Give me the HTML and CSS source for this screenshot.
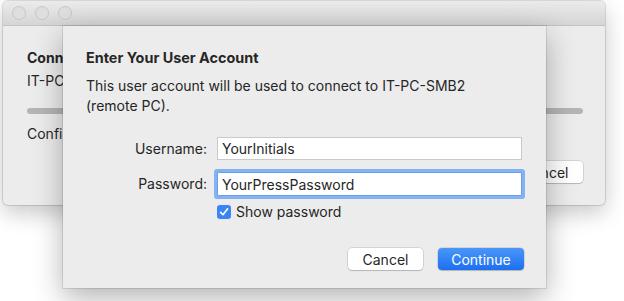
FILE: index.html
```html
<!DOCTYPE html>
<html lang="en">
<head>
    <meta charset="UTF-8">
    <title>Enter Your User Account</title>
    <link rel="stylesheet" href="styles.css">
</head>
<body>
    <div class="desktop">
        <!-- window behind the sheet, only the left edge of its text shows -->
        <div class="window">
            <div class="titlebar">
                <span class="light"></span>
                <span class="light"></span>
                <span class="light"></span>
            </div>
            <div class="window-body">
                <div class="bg-title clip">Conn</div>
                <div class="bg-text clip">IT-PC</div>
                <div class="progress"></div>
                <div class="bg-text bg-status clip">Confi</div>
                <div class="bg-actions">
                    <button class="btn">Cancel</button>
                </div>
            </div>
        </div>

        <!-- the sheet -->
        <div class="sheet">
            <div class="sheet-title">Enter Your User Account</div>
            <p class="sheet-text">This user account will be used to connect to IT-PC-SMB2<br>(remote PC).</p>
            <div class="form">
                <label class="form-label" for="username">Username:</label>
                <input class="field" id="username" type="text" value="YourInitials">
                <label class="form-label" for="password">Password:</label>
                <input class="field field-focus" id="password" type="text" value="YourPressPassword">
                <span></span>
                <label class="check">
                    <span class="checkbox">
                        <svg width="10" height="10" viewBox="0 0 10 10"><path d="M1.6 5.4 L4 7.8 L8.6 1.8" fill="none" stroke="#fff" stroke-width="1.6" stroke-linecap="round" stroke-linejoin="round"/></svg>
                    </span>
                    Show password
                </label>
            </div>
            <div class="sheet-actions">
                <button class="btn btn-cancel">Cancel</button>
                <button class="btn btn-primary">Continue</button>
            </div>
        </div>
    </div>
</body>
</html>
```

FILE: styles.css
```css
body {
    margin: 0;
    background: #fff;
    font-family: Inter, "Liberation Sans", sans-serif;
    color: #262626;
    font-size: 14px;
}

.desktop {
    position: relative;
    width: 624px;
    height: 301px;
    overflow: hidden;
}

/* background window */
.window {
    position: absolute;
    left: 3px;
    top: 1px;
    width: 602px;
    height: 204px;
    border-radius: 5px;
    background: #ececec;
    box-shadow: 0 0 0 1px rgba(0, 0, 0, 0.12), 0 8px 22px rgba(0, 0, 0, 0.22);
    overflow: hidden;
    display: flex;
    flex-direction: column;
}

.titlebar {
    height: 24px;
    background: linear-gradient(#ebebeb, #d5d5d5);
    border-bottom: 1px solid #c2c2c2;
    display: flex;
    align-items: center;
    gap: 9px;
    padding-left: 9px;
}

.light {
    width: 12px;
    height: 12px;
    border-radius: 50%;
    background: #dedede;
    border: 1px solid #c6c6c6;
}

.window-body {
    padding: 22px 22px 0 24px;
    display: flex;
    flex-direction: column;
}

.clip {
    width: 36px;
    overflow: hidden;
    white-space: nowrap;
}

.bg-title {
    font-weight: bold;
    font-size: 14px;
    line-height: 20px;
}

.bg-text {
    margin-top: 3px;
    line-height: 20px;
}

.progress {
    margin-top: 17px;
    height: 6px;
    border-radius: 3px;
    background: #b5b5b5;
}

.bg-status {
    margin-top: 10px;
}

.bg-actions {
    margin-top: 17px;
    display: flex;
    justify-content: flex-end;
}

/* sheet */
.sheet {
    position: absolute;
    left: 63px;
    top: 26px;
    width: 483px;
    height: 262px;
    box-sizing: border-box;
    background: #ececec;
    padding: 22px 22px 0 23px;
    box-shadow: 0 0 0 1px rgba(0, 0, 0, 0.1), 0 10px 28px rgba(0, 0, 0, 0.3);
}

.sheet-title {
    font-weight: bold;
    font-size: 14.4px;
    line-height: 20px;
}

.sheet-text {
    margin: 8px 0 0;
    line-height: 20px;
}

.form {
    margin-top: 21px;
    display: grid;
    grid-template-columns: 121px 305px;
    column-gap: 10px;
    row-gap: 12px;
    align-items: center;
}

.form-label {
    text-align: right;
    line-height: 20px;
}

.field {
    box-sizing: border-box;
    height: 23px;
    margin: 0;
    padding: 0 4px;
    border: 1px solid #c9c9c9;
    background: #fff;
    font: inherit;
    color: #262626;
    outline: none;
}

.field-focus {
    height: 24px;
    box-shadow: 0 0 0 3px #84b3f3;
    border-color: #6a9fe8;
    border-radius: 1px;
}

.check {
    margin-top: -6px;
    display: flex;
    align-items: center;
    gap: 5px;
    line-height: 20px;
}

.checkbox {
    width: 14px;
    height: 14px;
    border-radius: 3px;
    background: #3a84f5;
    display: flex;
    align-items: center;
    justify-content: center;
}

.sheet-actions {
    margin-top: 26px;
    display: flex;
    justify-content: flex-end;
    gap: 15px;
}

.btn {
    height: 22px;
    width: 75px;
    padding: 0;
    border: none;
    border-radius: 4px;
    background: #fff;
    box-shadow: 0 0 0 0.5px rgba(0, 0, 0, 0.2), 0 1px 1px rgba(0, 0, 0, 0.15);
    font: inherit;
    color: #262626;
}

.btn-primary {
    width: 86px;
    background: linear-gradient(#4a97f8, #1c6ff0);
    color: #fff;
}
```
